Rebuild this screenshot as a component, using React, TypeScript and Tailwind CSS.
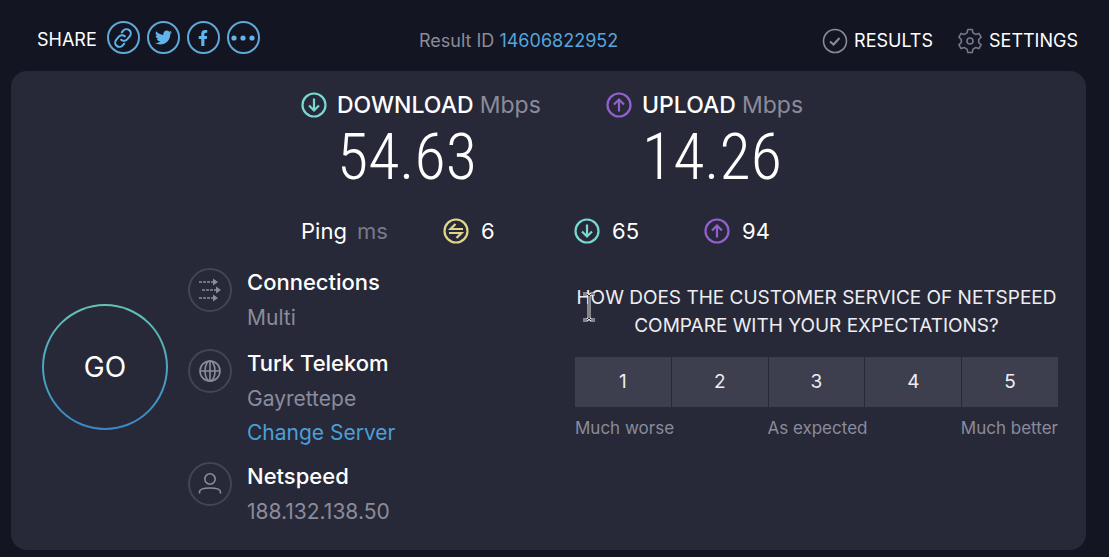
import type { ReactNode } from "react";
import { FaFacebookF, FaTwitter } from "react-icons/fa";

function LinkIcon() {
  return (
    <svg viewBox="0 0 24 24" className="size-6 -rotate-6" fill="none" stroke="currentColor" strokeWidth="2" strokeLinecap="round">
      <path d="M10 13.5a4.2 4.2 0 0 0 6 .3l3-3a4.2 4.2 0 0 0-6-6l-1.6 1.6" />
      <path d="M14 10.5a4.2 4.2 0 0 0-6-.3l-3 3a4.2 4.2 0 0 0 6 6l1.6-1.6" />
    </svg>
  );
}

function DotsIcon() {
  return (
    <svg viewBox="0 0 24 8" className="w-6" fill="currentColor">
      <circle cx="3" cy="4" r="2.6" />
      <circle cx="12" cy="4" r="2.6" />
      <circle cx="21" cy="4" r="2.6" />
    </svg>
  );
}

function CheckIcon() {
  return (
    <svg viewBox="0 0 26 26" className="size-[26px] text-[#8b8c9b]" fill="none" stroke="currentColor" strokeWidth="1.6">
      <circle cx="13" cy="13" r="11.5" />
      <path d="M8 13.5l3.5 3 6-6.5" strokeWidth="2" />
    </svg>
  );
}

function GearIcon() {
  return (
    <svg viewBox="0 0 26 26" className="size-[26px] text-[#77788a]" fill="none" stroke="currentColor" strokeWidth="1.6" strokeLinejoin="round">
      <path d="M10.8 1.5h4.4l.8 3.4 2.6 1.5 3.3-1 2.2 3.8-2.4 2.3v3l2.4 2.3-2.2 3.8-3.3-1-2.6 1.5-.8 3.4h-4.4l-.8-3.4-2.6-1.5-3.3 1-2.2-3.8 2.4-2.3v-3L1.9 9.2l2.2-3.8 3.3 1L10 4.9z" />
      <circle cx="13" cy="13" r="3" />
    </svg>
  );
}

function DownIcon() {
  return (
    <svg viewBox="0 0 26 26" className="size-[26px] text-[#79d8cf]" fill="none" stroke="currentColor" strokeWidth="2.2">
      <circle cx="13" cy="13" r="11.5" />
      <path d="M13 6.5v12M8 13.5l5 5 5-5" />
    </svg>
  );
}

function UpIcon() {
  return (
    <svg viewBox="0 0 26 26" className="size-[26px] text-[#9460cf]" fill="none" stroke="currentColor" strokeWidth="2.2">
      <circle cx="13" cy="13" r="11.5" />
      <path d="M13 19.5v-12M8 12.5l5-5 5 5" />
    </svg>
  );
}

function IdleIcon() {
  return (
    <svg viewBox="0 0 26 26" className="size-[26px] text-[#dfd68c]" fill="none" stroke="currentColor" strokeWidth="2.2">
      <circle cx="13" cy="13" r="11.5" />
      <path d="M20 11H7.5l5-5M6 15h12.5l-5 5" />
    </svg>
  );
}

function MultiIcon() {
  return (
    <svg viewBox="0 0 24 24" className="size-6" fill="none" stroke="currentColor" strokeWidth="1.6">
      <path d="M1 4h14M4 12h14M1 20h14" strokeDasharray="3 1" />
      <path d="M15 .5l5 3.5-5 3.5zM18 8.5l5 3.5-5 3.5zM15 16.5l5 3.5-5 3.5z" fill="currentColor" stroke="none" />
    </svg>
  );
}

function GlobeIcon() {
  return (
    <svg viewBox="0 0 24 24" className="size-6" fill="none" stroke="currentColor" strokeWidth="1.6">
      <circle cx="12" cy="12" r="10" />
      <ellipse cx="12" cy="12" rx="5" ry="10" />
      <path d="M2 12h20M12 2v20" />
    </svg>
  );
}

function UserIcon() {
  return (
    <svg viewBox="0 0 24 24" className="size-6" fill="none" stroke="currentColor" strokeWidth="1.6">
      <circle cx="12" cy="7" r="5.2" />
      <path d="M1.5 21.5V20c0-2.5 4-4 10.5-4s10.5 1.5 10.5 4v1.5" />
    </svg>
  );
}

function TextCursor() {
  return (
    <svg viewBox="0 0 14 30" className="absolute top-2 left-[7px] w-3.5" fill="none">
      <path d="M1 2h4l2 2 2-2h4M7 4v22M1 28h4l2-2 2 2h4" stroke="#e8e6e6" strokeWidth="3" />
      <path d="M1 2h4l2 2 2-2h4M7 4v22M1 28h4l2-2 2 2h4" stroke="#20202a" strokeWidth="1" />
    </svg>
  );
}

const shares = [
  { label: "Copy link", icon: <LinkIcon /> },
  { label: "Share on Twitter", icon: <FaTwitter className="size-[17px]" /> },
  { label: "Share on Facebook", icon: <FaFacebookF className="size-4" /> },
  { label: "More", icon: <DotsIcon /> },
];

function Metric({ icon, name, value }: { icon: ReactNode; name: string; value: string }) {
  return (
    <div className="grid grid-cols-[26px_auto] gap-x-2.5">
      {icon}
      <h2 className="text-[23px] leading-[26px] font-medium text-white">
        {name} <span className="font-normal text-[#8b8b9c]">Mbps</span>
      </h2>
      <p className="col-start-2 pt-1 font-['Roboto_Condensed',Roboto,sans-serif] text-[64px] leading-[72px] font-light text-white">
        {value}
      </p>
    </div>
  );
}

function InfoRow({ icon, title, children }: { icon: ReactNode; title: string; children: ReactNode }) {
  return (
    <div className="flex gap-[15px]">
      <div className="mt-1 flex size-11 shrink-0 items-center justify-center rounded-full border-2 border-[#444554] text-[#8b8c9b]">
        {icon}
      </div>
      <div className="text-[21px] leading-9 text-[#8b8b9c]">
        <h3 className="text-[22px] font-medium text-white">{title}</h3>
        {children}
      </div>
    </div>
  );
}

export default function App() {
  return (
    <div className="min-h-screen bg-[#131622] px-[11px] pb-1.5 font-[Inter,sans-serif] text-white">
      <header className="grid h-[71px] grid-cols-[382fr_659fr] pt-1 pr-5 pl-[26px]">
        <div className="flex items-center gap-2.5 text-[18px]">
          <span className="pt-1">SHARE</span>
          <div className="flex gap-[7px]">
            {shares.map((s) => (
              <button key={s.label} aria-label={s.label} className="flex size-[33px] items-center justify-center rounded-full border-2 border-[#5fa9d8] text-[#62b5ea]">
                {s.icon}
              </button>
            ))}
          </div>
        </div>
        <div className="flex items-center justify-between pt-1.5 text-[18px]">
          <p className="text-[#8b8b9c]">
            Result ID <a href="#result" className="text-[#55a5dc]">14606822952</a>
          </p>
          <nav className="flex gap-6">
            <a href="#results" className="flex items-center gap-1.5"><CheckIcon />RESULTS</a>
            <a href="#settings" className="flex items-center gap-1.5"><GearIcon />SETTINGS</a>
          </nav>
        </div>
      </header>

      <main className="mr-3 rounded-2xl bg-[#272938] pt-[21px] pr-7 pb-5 pl-[31px]">
        {/* Speeds */}
        <div className="grid grid-cols-[305fr_452fr] pl-[259px]">
          <Metric icon={<DownIcon />} name="DOWNLOAD" value="54.63" />
          <Metric icon={<UpIcon />} name="UPLOAD" value="14.26" />
        </div>

        {/* Ping */}
        <div className="mt-6 grid grid-cols-[142fr_131fr_130fr_354fr] items-center pl-[259px] text-[22px] leading-[26px]">
          <p>Ping <span className="ml-1 text-[#77788a]">ms</span></p>
          <p className="flex gap-3"><IdleIcon />6</p>
          <p className="flex gap-3"><DownIcon />65</p>
          <p className="flex gap-3"><UpIcon />94</p>
        </div>

        <div className="mt-5 grid grid-cols-[146px_387fr_483fr]">
          <button className="mt-10 size-[126px] rounded-full bg-linear-to-b from-[#65c2b5] to-[#3a86c4] p-0.5">
            <span className="flex size-full items-center justify-center rounded-full bg-[#272938] text-[28px]">GO</span>
          </button>

          <div className="flex flex-col gap-[9px]">
            <InfoRow icon={<MultiIcon />} title="Connections">
              <p>Multi</p>
            </InfoRow>
            <InfoRow icon={<GlobeIcon />} title="Turk Telekom">
              <p>Gayrettepe</p>
              <a href="#servers" className="block leading-8 text-[#4c9fd6]">Change Server</a>
            </InfoRow>
            <InfoRow icon={<UserIcon />} title="Netspeed">
              <p>188.132.138.50</p>
            </InfoRow>
          </div>

          {/* Survey */}
          <section className="pt-5">
            <div className="relative">
              <h2 className="text-center text-[19px] leading-7 text-[#eeeef2]">
                HOW DOES THE CUSTOMER SERVICE OF NETSPEED
                <br />
                COMPARE WITH YOUR EXPECTATIONS?
              </h2>
              <TextCursor />
            </div>
            <div className="mt-[17px] grid grid-cols-5 gap-px">
              {[1, 2, 3, 4, 5].map((n) => (
                <button key={n} className="h-[50px] bg-[#3d3e4e] text-[19px] text-[#eeeef2]">{n}</button>
              ))}
            </div>
            <div className="mt-2 flex justify-between text-[17px] leading-[26px] text-[#8b8b9c]">
              <span>Much worse</span>
              <span>As expected</span>
              <span>Much better</span>
            </div>
          </section>
        </div>
      </main>
    </div>
  );
}
